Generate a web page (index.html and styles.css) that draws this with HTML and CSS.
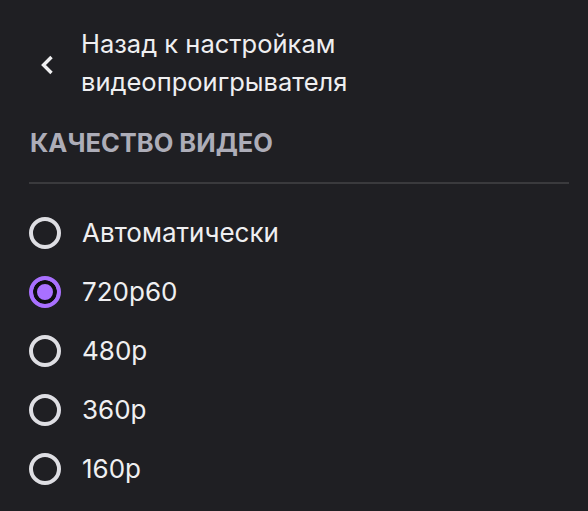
FILE: index.html
```html
<!DOCTYPE html>
<html lang="ru">
<head>
<meta charset="utf-8">
<link rel="stylesheet" href="styles.css">
</head>
<body>
<div class="menu">
  <button class="back" type="button">
    <svg class="back-icon" viewBox="0 0 30 30" width="30" height="30" aria-hidden="true">
      <polyline points="19.5,7 11.5,15 19.5,23" fill="none" stroke="#efeff1" stroke-width="3.4" stroke-linecap="butt" stroke-linejoin="miter"/>
    </svg>
    <span class="back-text">Назад к настройкам<br>видеопроигрывателя</span>
  </button>
  <h2 class="title">КАЧЕСТВО ВИДЕО</h2>
  <div class="divider"></div>
  <ul class="options">
    <li class="option"><span class="radio"></span><span class="label">Автоматически</span></li>
    <li class="option"><span class="radio checked"></span><span class="label">720p60</span></li>
    <li class="option"><span class="radio"></span><span class="label">480p</span></li>
    <li class="option"><span class="radio"></span><span class="label">360p</span></li>
    <li class="option"><span class="radio"></span><span class="label">160p</span></li>
  </ul>
</div>
</body>
</html>
```

FILE: styles.css
```css
html, body {
  margin: 0;
  padding: 0;
  background: #1f1f23;
}
body {
  font-family: Inter, "Noto Sans", "DejaVu Sans", sans-serif;
  color: #efeff1;
  width: 588px;
  height: 511px;
  overflow: hidden;
}
.menu {
  padding: 25px 19px 0 29px;
}
.back {
  display: flex;
  align-items: center;
  background: none;
  border: 0;
  padding: 0;
  margin: 0;
  color: inherit;
  font: inherit;
  text-align: left;
  cursor: pointer;
}
.back-icon {
  display: block;
  margin-left: 3px;
  margin-right: 19px;
  margin-top: 4px;
  flex: none;
}
.back-text {
  font-size: 25.5px;
  line-height: 38px;
}
.title {
  margin: 27px 0 0 1px;
  font-size: 25.5px;
  line-height: 30px;
  font-weight: 700;
  color: #adadb8;
}
.divider {
  margin-top: 24px;
  height: 2px;
  background: #3a3a3d;
}
.options {
  list-style: none;
  margin: 19px 0 0;
  padding: 0;
}
.option {
  display: flex;
  align-items: center;
  height: 59px;
}
.radio {
  box-sizing: border-box;
  width: 32px;
  height: 32px;
  border-radius: 50%;
  border: 4px solid #dedee3;
  flex: none;
}
.radio.checked {
  border-color: #a970ff;
  background: #a970ff;
  box-shadow: inset 0 0 0 4px #0e0e10;
}
.label {
  margin-left: 21px;
  font-size: 26px;
  line-height: 30px;
}
```
